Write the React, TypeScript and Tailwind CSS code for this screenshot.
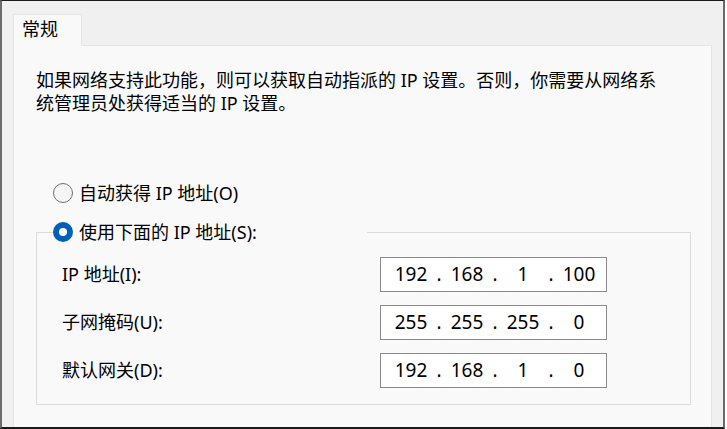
import { ReactNode } from 'react';

const font = { fontFamily: '"Noto Sans", "Noto Sans CJK SC", sans-serif' };

interface IpFieldProps {
  parts: string[];
}

const IpField = ({ parts }: IpFieldProps) => {
  return (
    <div className="flex h-[35px] w-[227px] items-center border border-[#8a8a8a] bg-white pl-[7px] text-[19px] text-black">
      {parts.map((part, i) => (
        <div className="flex items-center" key={i}>
          <span className="w-[46px] text-center">{part}</span>
          {i < parts.length - 1 && <span className="w-[10px] text-center">.</span>}
        </div>
      ))}
    </div>
  );
};

interface RadioProps {
  checked?: boolean;
  children: ReactNode;
}

const Radio = ({ checked, children }: RadioProps) => {
  return (
    <div className="flex h-[24px] items-center gap-[6px]">
      {checked ? (
        <span className="flex h-[20px] w-[20px] items-center justify-center rounded-full bg-[#005fb8]">
          <span className="h-[8px] w-[8px] rounded-full bg-white" />
        </span>
      ) : (
        <span className="h-[20px] w-[20px] rounded-full border border-[#6f6f6f] bg-[#f5f5f5]" />
      )}
      <span className="text-[18px] leading-[24px] text-black">{children}</span>
    </div>
  );
};

const rows = [
  { label: 'IP 地址(I):', parts: ['192', '168', '1', '100'] },
  { label: '子网掩码(U):', parts: ['255', '255', '255', '0'] },
  { label: '默认网关(D):', parts: ['192', '168', '1', '0'] },
];

export default function App() {
  return (
    <div className="h-[429px] w-[727px] overflow-hidden bg-white" style={font}>
      <div className="flex h-[429px] w-[725px] flex-col border-t border-l-2 border-r-2 border-b-2 border-t-[#1a1a1a] border-l-[#6b6b6b] border-r-[#6b6b6b] border-b-[#1a1a1a] bg-[#f0f0f0] pl-[11px] pr-[11px] pt-[13px]">
        <div className="flex">
          <div className="relative z-10 -mb-px flex h-[32px] w-[69px] items-start border border-b-0 border-[#e5e5e5] bg-[#f9f9f9] pl-[8px] pt-[2px] text-[18px] leading-[24px] text-black">
            常规
          </div>
        </div>
        <div className="flex-1 border border-b-0 border-[#e5e5e5] bg-[#f9f9f9] pl-[22px] pr-[20px] pt-[23px]">
          <p className="text-[18px] leading-[23px] text-black">
            如果网络支持此功能，则可以获取自动指派的 IP 设置。否则，你需要从网络系
            <br />
            统管理员处获得适当的 IP 设置。
          </p>

          <div className="mt-[66px] pl-[17px]">
            <Radio>自动获得 IP 地址(O)</Radio>
          </div>

          <fieldset className="mt-[15px] w-[655px] border border-[#dcdcdc]">
            <legend className="ml-[16px] w-[314px]">
              <Radio checked>使用下面的 IP 地址(S):</Radio>
            </legend>
            <div className="flex flex-col gap-[13px] pb-[16px] pl-[25px] pt-[13px]">
              {rows.map((row) => (
                <div className="flex items-center" key={row.label}>
                  <span className="w-[318px] text-[18px] text-black">{row.label}</span>
                  <IpField parts={row.parts} />
                </div>
              ))}
            </div>
          </fieldset>
        </div>
      </div>
    </div>
  );
}
